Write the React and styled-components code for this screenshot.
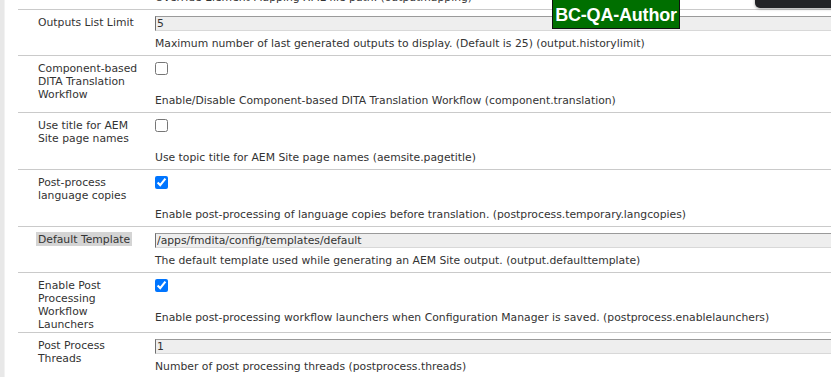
import React from 'react'
import styled, {createGlobalStyle} from 'styled-components'

const GlobalStyle = createGlobalStyle`
	html, body {
		margin: 0;
		padding: 0;
		background: #fff;
		overflow: hidden;
	}
	body {
		font-family: "DejaVu Sans", Verdana, sans-serif;
		font-size: 10.8px;
		line-height: 13px;
		color: #333;
	}
`

const settings = [
	{
		label: 'Override Element Mapping',
		kind: 'text',
		value: '',
		desc: 'Override Element Mapping XML file path. (outputmapping)',
	},
	{
		label: 'Outputs List Limit',
		kind: 'text',
		value: '5',
		desc: 'Maximum number of last generated outputs to display. (Default is 25) (output.historylimit)',
	},
	{
		label: 'Component-based DITA Translation Workflow',
		kind: 'check',
		checked: false,
		desc: 'Enable/Disable Component-based DITA Translation Workflow (component.translation)',
	},
	{
		label: 'Use title for AEM Site page names',
		kind: 'check',
		checked: false,
		desc: 'Use topic title for AEM Site page names (aemsite.pagetitle)',
	},
	{
		label: 'Post-process language copies',
		kind: 'check',
		checked: true,
		desc: 'Enable post-processing of language copies before translation. (postprocess.temporary.langcopies)',
	},
	{
		label: 'Default Template',
		kind: 'text',
		value: '/apps/fmdita/config/templates/default',
		selected: true,
		desc: 'The default template used while generating an AEM Site output. (output.defaulttemplate)',
	},
	{
		label: 'Enable Post Processing Workflow Launchers',
		kind: 'check',
		checked: true,
		desc: 'Enable post-processing workflow launchers when Configuration Manager is saved. (postprocess.enablelaunchers)',
	},
	{
		label: 'Post Process Threads',
		kind: 'text',
		value: '1',
		desc: 'Number of post processing threads (postprocess.threads)',
	},
]

const App = () => {
	return (
		<Page>
			<GlobalStyle />
			<Gutter />
			<Content>
				<List>
					{settings.map((s) => (
						<Row key={s.label}>
							<Label>
								{s.selected ? <Selected>{s.label}</Selected> : s.label}
							</Label>
							<Value>
								{s.kind === 'text' ? (
									<TextInput defaultValue={s.value} readOnly />
								) : (
									<CheckWrap>
										<Check type='checkbox' defaultChecked={s.checked} />
									</CheckWrap>
								)}
								<Desc $gap={s.kind === 'text' ? 6 : 7}>{s.desc}</Desc>
							</Value>
						</Row>
					))}
				</List>
			</Content>
			<EnvBadge>BC-QA-Author</EnvBadge>
			<TopPanel />
		</Page>
	)
}

const Page = styled.div`
	position: relative;
	display: flex;
	min-height: 377px;
	overflow: hidden;
`

const Gutter = styled.div`
	flex: 0 0 4px;
	background: #e8e8e8;
	border-right: 1px solid #f2f2f2;
`

const Content = styled.div`
	flex: 1;
	padding-left: 13px;
	min-width: 0;
`

const List = styled.div`
	margin-top: -36px;
`

const Row = styled.div`
	display: grid;
	grid-template-columns: 117px 1fr;
	padding: 6px 0 1px 20px;
	border-bottom: 1px solid #cacaca;
`

const Label = styled.div`
	padding-right: 12px;
`

const Selected = styled.span`
	background: #d4d4d4;
	padding: 1px 2px 0;
	margin-left: -2px;
	white-space: nowrap;
`

const Value = styled.div`
	padding-bottom: 4px;
	min-width: 0;
`

const TextInput = styled.input`
	display: block;
	box-sizing: border-box;
	width: calc(100% + 20px);
	height: 15px;
	margin: 0;
	padding: 0 1px;
	font: inherit;
	line-height: 13px;
	color: #333;
	background: #eeeeee;
	border: 1px solid;
	border-color: #9a9a9a #d8d8d8 #d8d8d8 #6f6f6f;
	outline: none;
`

const CheckWrap = styled.div`
	height: 25px;
`

const Check = styled.input`
	display: block;
	width: 13px;
	height: 13px;
	margin: 0;
`

const Desc = styled.div`
	margin-top: ${(p) => p.$gap}px;
	white-space: nowrap;
`

const EnvBadge = styled.div`
	position: absolute;
	left: 552px;
	top: -4px;
	width: 126px;
	height: 31px;
	display: flex;
	align-items: flex-end;
	justify-content: center;
	background: #006f00;
	border: 1px solid #111;
	color: #fff;
	font-family: "Liberation Sans", Arial, sans-serif;
	font-weight: bold;
	font-size: 18px;
	line-height: 26px;
	letter-spacing: -0.2px;
`

const TopPanel = styled.div`
	position: absolute;
	right: -10px;
	top: -10px;
	width: 86px;
	height: 18px;
	background: #222326;
	border-bottom-left-radius: 5px;
	box-shadow: 0 1px 3px rgba(0, 0, 0, 0.35);
`

export default App
